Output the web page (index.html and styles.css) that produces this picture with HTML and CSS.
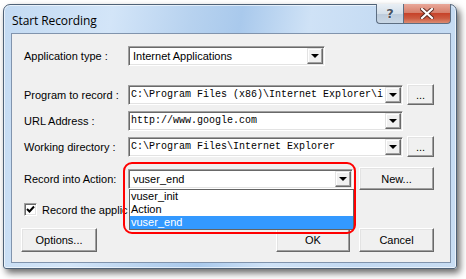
FILE: index.html
```html
<!DOCTYPE html>
<html lang="en">
<head>
  <meta charset="UTF-8">
  <title>Start Recording</title>
  <link rel="stylesheet" href="styles.css">
</head>
<body>
  <div class="window">
    <!-- Title bar -->
    <div class="titlebar">
      <span class="title">Start Recording</span>
      <div class="caption-buttons">
        <span class="cap-btn help">?</span>
        <span class="cap-btn close">
          <svg width="14" height="11" viewBox="0 0 14 11"><path d="M2 1 L12 10 M12 1 L2 10" stroke="#5a2a22" stroke-width="4" stroke-linecap="square"/><path d="M2 1 L12 10 M12 1 L2 10" stroke="#fff" stroke-width="2.2" stroke-linecap="square"/></svg>
        </span>
      </div>
    </div>

    <!-- Dialog body -->
    <div class="client">
      <div class="row row-app">
        <span class="lbl">Application type :</span>
        <div class="combo combo-app">
          <span class="val">Internet Applications</span>
          <span class="arrow"></span>
        </div>
      </div>

      <div class="row row-program">
        <span class="lbl">Program to record :</span>
        <div class="combo combo-wide">
          <span class="val mono">C:\Program Files (x86)\Internet Explorer\i</span>
          <span class="arrow"></span>
        </div>
        <button class="btn btn-browse">...</button>
      </div>

      <div class="row row-url">
        <span class="lbl">URL Address :</span>
        <div class="combo combo-wide">
          <span class="val mono">http://www.google.com</span>
          <span class="arrow"></span>
        </div>
      </div>

      <div class="row row-dir">
        <span class="lbl">Working directory :</span>
        <div class="combo combo-wide">
          <span class="val mono">C:\Program Files\Internet Explorer</span>
          <span class="arrow"></span>
        </div>
        <button class="btn btn-browse">...</button>
      </div>

      <div class="row row-action">
        <span class="lbl">Record into Action:</span>
        <div class="combo combo-action">
          <span class="val">vuser_end</span>
          <span class="arrow"></span>
          <ul class="dropdown">
            <li>vuser_init</li>
            <li>Action</li>
            <li class="selected">vuser_end</li>
          </ul>
          <div class="annotation"></div>
        </div>
        <button class="btn btn-new">New...</button>
      </div>

      <div class="row row-check">
        <span class="checkbox">
          <svg width="9" height="9" viewBox="0 0 9 9"><path d="M1 4 L3.5 6.5 L8 1.5" fill="none" stroke="#000" stroke-width="2"/></svg>
        </span>
        <span class="check-label">Record the applic</span>
      </div>

      <div class="row row-buttons">
        <button class="btn btn-options">Options...</button>
        <button class="btn btn-ok">OK</button>
        <button class="btn btn-cancel">Cancel</button>
      </div>
    </div>
  </div>
</body>
</html>
```

FILE: styles.css
```css
* {
  box-sizing: border-box;
}

body {
  margin: 0;
  width: 466px;
  height: 279px;
  overflow: hidden;
  background: #fff;
  font-family: "Liberation Sans", Arial, sans-serif;
  font-size: 11px;
  color: #000;
}

/* Window frame */
.window {
  margin: 4px 0 0 3px;
  width: 454px;
  height: 265px;
  border: 1px solid #4f6277;
  border-radius: 7px 7px 3px 3px;
  padding: 0 5px 5px 7px;
  display: flex;
  flex-direction: column;
  background:
    linear-gradient(100deg, #c3daf2 0%, #d3e5f8 22%, #b7d2ef 38%, #a9c9ec 48%, #cfe2f6 62%, #c2d9f2 80%, #c8ddf3 100%);
  box-shadow: 3px 4px 7px rgba(0, 0, 0, 0.6), inset 0 0 0 1px rgba(255, 255, 255, 0.6);
}

.titlebar {
  height: 28px;
  display: flex;
  justify-content: space-between;
  align-items: flex-start;
}

.title {
  font-family: "Open Sans", "Noto Sans", sans-serif;
  font-size: 12px;
  padding: 7px 0 0 1px;
  letter-spacing: -0.1px;
}

.caption-buttons {
  display: flex;
  margin-top: -1px;
}

.cap-btn {
  height: 20px;
  display: flex;
  align-items: center;
  justify-content: center;
  border: 1px solid #5d6e82;
  border-top: none;
}

.help {
  width: 27px;
  border-radius: 0 0 0 4px;
  border-right: none;
  background: linear-gradient(#e9eff5, #d5e0ea 50%, #bccbdb 51%, #c9d7e5);
  font-family: "DejaVu Sans", sans-serif;
  font-weight: bold;
  font-size: 13px;
  color: #4a5563;
  text-shadow: 0 0 1px #fff, 0 0 1px #fff;
}

.close {
  width: 48px;
  border-radius: 0 0 4px 0;
  background: linear-gradient(#e9a89a, #d7806c 45%, #c7432a 50%, #cc5a40 75%, #dc8b72);
}

/* Client area */
.client {
  flex: 1;
  background: #f0f0f0;
  border: 1px solid #8194ad;
  display: flex;
  flex-direction: column;
}

.row {
  display: flex;
  align-items: center;
  padding-left: 12px;
  flex: none;
}

.lbl {
  width: 104px;
  flex: none;
  white-space: nowrap;
}

.row-app { margin-top: 12px; height: 20px; }
.row-program { margin-top: 18px; height: 21px; }
.row-url { margin-top: 5px; height: 21px; }
.row-dir { margin-top: 5px; height: 21px; }
.row-action { margin-top: 10px; height: 23px; }
.row-check { margin-top: 13px; height: 13px; }
.row-buttons { margin-top: 12px; height: 24px; padding-left: 9px; }

/* Combo boxes */
.combo {
  position: relative;
  height: 20px;
  display: flex;
  align-items: center;
  background: #fff;
  border: 1px solid;
  border-color: #a0a0a0 #fff #fff #a0a0a0;
  box-shadow: inset 1px 1px 0 #696969, inset -1px -1px 0 #e3e3e3;
  padding: 1px 1px 1px 2px;
  flex: none;
}

.combo-app { width: 197px; }
.combo-wide { width: 275px; }
.combo-action { width: 225px; }

.val {
  flex: 1;
  overflow: hidden;
  white-space: nowrap;
  padding-left: 2px;
}

.val.mono {
  font-family: "Liberation Mono", "Courier New", monospace;
  font-size: 10px;
  padding-left: 0;
}

.arrow {
  width: 16px;
  height: 16px;
  flex: none;
  position: relative;
  background: #f0f0f0;
  border: 1px solid;
  border-color: #e3e3e3 #696969 #696969 #e3e3e3;
  box-shadow: inset -1px -1px 0 #a0a0a0, inset 1px 1px 0 #fff;
}

.arrow::after {
  content: "";
  position: absolute;
  left: 3px;
  top: 5px;
  border-left: 4px solid transparent;
  border-right: 4px solid transparent;
  border-top: 4px solid #000;
}

/* Open list of Record into Action */
.dropdown {
  position: absolute;
  left: 0;
  top: 19px;
  width: 225px;
  height: 41px;
  margin: 0;
  padding: 0;
  list-style: none;
  background: #fff;
  border: 1px solid #646464;
  z-index: 2;
}

.dropdown li {
  height: 13px;
  line-height: 13px;
  padding-left: 1px;
}

.dropdown li.selected {
  background: #3399ff;
  color: #fff;
}

/* Red hand-drawn marker around the combo */
.annotation {
  position: absolute;
  left: -6px;
  top: -8px;
  width: 233px;
  height: 72px;
  border: 2px solid #f00;
  border-radius: 9px;
  z-index: 3;
  pointer-events: none;
}

/* Buttons */
.btn {
  font-family: "Liberation Sans", Arial, sans-serif;
  font-size: 11px;
  color: #000;
  background: #f0f0f0;
  border: 1px solid;
  border-color: #fff #696969 #696969 #fff;
  box-shadow: inset -1px -1px 0 #a0a0a0, inset 1px 1px 0 #e3e3e3;
  padding: 0;
  flex: none;
}

.btn-browse {
  width: 27px;
  height: 21px;
  margin-left: 4px;
}

.btn-new {
  width: 75px;
  height: 23px;
  margin-left: 6px;
}

.btn-options {
  width: 76px;
  height: 24px;
}

.btn-ok {
  width: 74px;
  height: 24px;
  margin-left: 179px;
}

.btn-cancel {
  width: 75px;
  height: 24px;
  margin-left: 9px;
}

/* Checkbox */
.checkbox {
  width: 13px;
  height: 13px;
  flex: none;
  display: flex;
  align-items: center;
  justify-content: center;
  background: #fff;
  border: 1px solid;
  border-color: #a0a0a0 #fff #fff #a0a0a0;
  box-shadow: inset 1px 1px 0 #696969, inset -1px -1px 0 #e3e3e3;
}

.check-label {
  margin-left: 5px;
  white-space: nowrap;
  font-size: 11px;
}
```
